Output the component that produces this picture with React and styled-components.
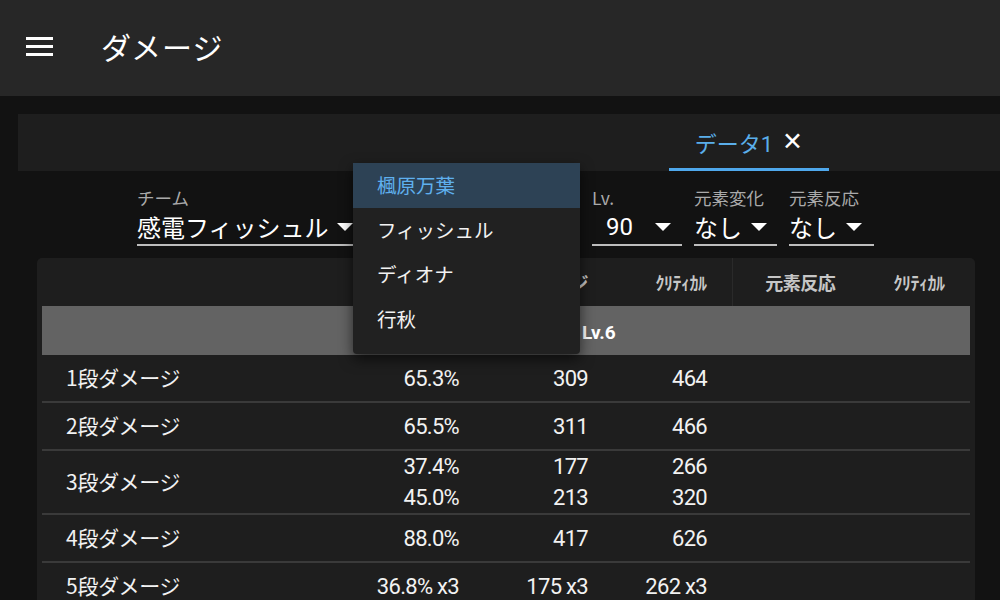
import React from 'react'
import styled, { createGlobalStyle } from 'styled-components'

const Global = createGlobalStyle`
  html, body { margin: 0; padding: 0; background: #121212; }
  body {
    width: 1000px;
    height: 600px;
    overflow: hidden;
    color: #fff;
    font-family: Roboto, "Noto Sans CJK JP", sans-serif;
  }
`

const AppBar = styled.header`
  height: 96px;
  background: #272727;
  display: flex;
  align-items: center;
  padding-left: 26px;
  gap: 48px;
  box-sizing: border-box;
`

const MenuButton = styled.div`
  width: 27px;
  height: 20px;
  display: flex;
  margin-top: -2px;
`

const Title = styled.h1`
  margin: 0 0 4px;
  font-family: "Noto Sans CJK JP", sans-serif;
  font-weight: 400;
  font-size: 30px;
  letter-spacing: 1px;
`

const Main = styled.main`
  padding: 18px 0 0 18px;
`

const TabBar = styled.div`
  height: 57px;
  background: #1e1e1e;
  display: flex;
  padding-left: 651px;
`

const Tab = styled.div`
  width: 160px;
  display: flex;
  align-items: center;
  justify-content: center;
  gap: 9px;
  border-bottom: 3px solid #4fa8ec;
  box-sizing: border-box;
  padding-top: 1px;
`

const TabLabel = styled.span`
  font-family: Roboto, "Noto Sans CJK JP", sans-serif;
  font-size: 22px;
  color: #5aaeea;
`

const Close = styled.span`
  font-size: 25px;
  color: #fff;
  line-height: 1;
`

const Form = styled.div`
  display: flex;
  gap: 12px;
  padding: 16px 0 0 119px;
  height: 87px;
  box-sizing: border-box;
  position: relative;
`

const Field = styled.div`
  width: ${p => p.w}px;
  display: flex;
  flex-direction: column;
`

const Label = styled.span`
  font-family: "Noto Sans CJK JP", sans-serif;
  font-size: 17.5px;
  color: #aaa;
  line-height: 22px;
  height: 22px;
`

const Value = styled.div`
  display: flex;
  align-items: center;
  justify-content: space-between;
  border-bottom: 2px solid #bdbdbd;
  height: 37px;
  box-sizing: border-box;
  padding: 0 2px 0 ${p => p.indent || 0}px;
  font-family: Roboto, "Noto Sans CJK JP", sans-serif;
  font-size: 24px;
  white-space: nowrap;
`

const Caret = styled.span`
  flex: none;
  width: 0;
  height: 0;
  border-left: 8px solid transparent;
  border-right: 8px solid transparent;
  border-top: 8px solid #fff;
  margin-right: ${p => p.mr || 0}px;
  margin-left: 4px;
`

const Menu = styled.ul`
  position: absolute;
  left: 335px;
  top: -8px;
  width: 227px;
  margin: 0;
  padding: 0 0 12px;
  list-style: none;
  background: #212121;
  border-radius: 4px;
  box-shadow: 0 5px 14px rgba(0, 0, 0, 0.6);
  z-index: 5;
`

const MenuItem = styled.li`
  height: 44.7px;
  display: flex;
  align-items: center;
  padding-left: 24px;
  padding-bottom: 2px;
  box-sizing: border-box;
  font-family: "Noto Sans CJK JP", sans-serif;
  font-size: 19.5px;
  color: ${p => (p.active ? '#5fb0ee' : '#f2f2f2')};
  background: ${p => (p.active ? '#2d4255' : 'transparent')};
`

const Card = styled.div`
  margin-left: 19px;
  width: 938px;
  background: #1e1e1e;
  border-radius: 5px;
  padding: 0 5px;
  box-sizing: border-box;
`

const Table = styled.table`
  width: 928px;
  border-collapse: collapse;
  table-layout: fixed;
`

const Col = styled.col`
  width: ${p => p.w}px;
`

const Th = styled.th`
  height: 47px;
  padding: 0 ${p => p.pr || 0}px 0 0;
  text-align: ${p => p.align || 'center'};
  font-family: "Noto Sans CJK JP", sans-serif;
  font-weight: 700;
  font-size: 18px;
  color: #c6c6c6;
  border-left: ${p => (p.divider ? '1px solid #2a2a2a' : 'none')};
  letter-spacing: -0.5px;
  white-space: nowrap;
`

const SectionCell = styled.td`
  height: 47px;
  background: #636363;
  text-align: center;
  font-family: Roboto, "Noto Sans CJK JP", sans-serif;
  font-weight: 700;
  font-size: 19px;
  color: #fff;
  padding-left: 106px;
  border-top: 1px solid #1e1e1e;
`

const Tr = styled.tr`
  border-bottom: 2px solid #3a3a3a;
`

const Td = styled.td`
  height: ${p => (p.tall ? 62 : 46)}px;
  padding: 0 ${p => p.pr || 0}px 0 ${p => p.pl || 0}px;
  text-align: ${p => p.align || 'right'};
  font-family: Roboto, "Noto Sans CJK JP", sans-serif;
  font-size: 22px;
  letter-spacing: -0.7px;
  line-height: 31px;
  color: #f2f2f2;
  vertical-align: middle;
  white-space: nowrap;
`

const RowLabel = styled.span`
  font-family: "Noto Sans CJK JP", sans-serif;
  font-size: 21px;
  letter-spacing: -0.2px;
`

const rows = [
  { name: '1段ダメージ', v: [['65.3%'], ['309'], ['464']] },
  { name: '2段ダメージ', v: [['65.5%'], ['311'], ['466']] },
  { name: '3段ダメージ', v: [['37.4%', '45.0%'], ['177', '213'], ['266', '320']] },
  { name: '4段ダメージ', v: [['88.0%'], ['417'], ['626']] },
  { name: '5段ダメージ', v: [['36.8% x3'], ['175 x3'], ['262 x3']] },
]

const Lines = ({ items }) => items.map((t, i) => <div key={i}>{t}</div>)

export default function App() {
  return (
    <>
      <Global />
      <AppBar>
        <MenuButton>
          <svg width="27" height="20" viewBox="0 0 27 20">
            <rect x="0" y="0" width="27" height="3" fill="#fff" />
            <rect x="0" y="8" width="27" height="3" fill="#fff" />
            <rect x="0" y="16" width="27" height="3" fill="#fff" />
          </svg>
        </MenuButton>
        <Title>ダメージ</Title>
      </AppBar>
      <Main>
        <TabBar>
          <Tab>
            <TabLabel>データ1</TabLabel>
            <Close>✕</Close>
          </Tab>
        </TabBar>
        <Form>
          <Field w={218}>
            <Label>チーム</Label>
            <Value>
              感電フィッシュル
              <Caret mr={0} />
            </Value>
          </Field>
          <Field w={213}>
            <Label>キャラクター</Label>
            <Value>
              楓原万葉
              <Caret />
            </Value>
          </Field>
          <Field w={90}>
            <Label>Lv.</Label>
            <Value indent={14}>
              90
              <Caret mr={9} />
            </Value>
          </Field>
          <Field w={83}>
            <Label>元素変化</Label>
            <Value>
              なし
              <Caret mr={8} />
            </Value>
          </Field>
          <Field w={85}>
            <Label>元素反応</Label>
            <Value>
              なし
              <Caret mr={10} />
            </Value>
          </Field>
          <Menu>
            <MenuItem active>楓原万葉</MenuItem>
            <MenuItem>フィッシュル</MenuItem>
            <MenuItem>ディオナ</MenuItem>
            <MenuItem>行秋</MenuItem>
          </Menu>
        </Form>
        <Card>
          <Table>
            <colgroup>
              <Col w={258} />
              <Col w={175} />
              <Col w={129} />
              <Col w={128} />
              <Col w={136} />
              <Col w={102} />
            </colgroup>
            <thead>
              <tr>
                <Th />
                <Th align="right" pr={16}>倍率</Th>
                <Th align="right" pr={16}>ダメージ</Th>
                <Th align="right" pr={25}>ｸﾘﾃｨｶﾙ</Th>
                <Th divider>元素反応</Th>
                <Th>ｸﾘﾃｨｶﾙ</Th>
              </tr>
            </thead>
            <tbody>
              <tr>
                <SectionCell colSpan={6}>通常攻撃 Lv.6</SectionCell>
              </tr>
              {rows.map(r => (
                <Tr key={r.name}>
                  <Td align="left" pl={24} tall={r.v[0].length > 1}>
                    <RowLabel>{r.name}</RowLabel>
                  </Td>
                  <Td pr={16}><Lines items={r.v[0]} /></Td>
                  <Td pr={16}><Lines items={r.v[1]} /></Td>
                  <Td pr={25}><Lines items={r.v[2]} /></Td>
                  <Td />
                  <Td />
                </Tr>
              ))}
            </tbody>
          </Table>
        </Card>
      </Main>
    </>
  )
}
